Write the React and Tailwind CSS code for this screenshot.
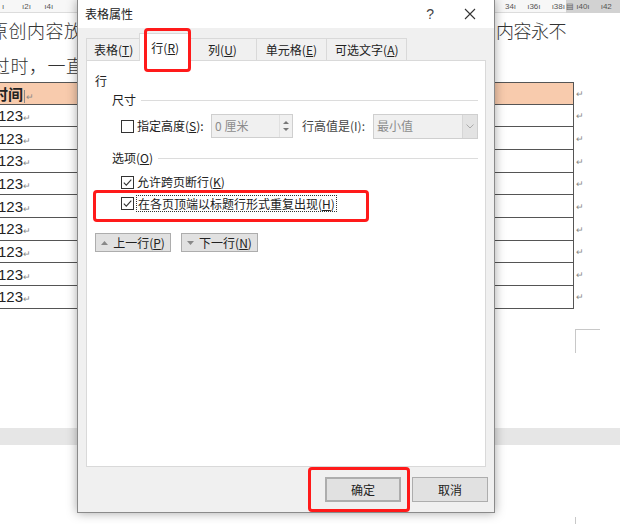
import React from "react";

const CJK = "font-['Microsoft_YaHei','Noto_Sans_CJK_SC',sans-serif]";

function U({ children }) {
  return <span className="underline underline-offset-1">{children}</span>;
}

function Check({ checked }) {
  return (
    <span className="w-[13px] h-[13px] border border-[#333] bg-white flex items-center justify-center shrink-0">
      {checked && (
        <svg width="11" height="11" viewBox="0 0 11 11">
          <polyline points="1.8,5.6 4.3,8.2 9.3,2.6" fill="none" stroke="#333" strokeWidth="1.1" />
        </svg>
      )}
    </span>
  );
}

function DocRow({ header }) {
  return (
    <div className="flex h-[22.67px]">
      <div
        className={
          header
            ? "w-[578px] -ml-[4px] border-t border-b border-r border-[#555] bg-[#f8cbad] flex items-center"
            : "w-[578px] -ml-[4px] border-b border-r border-[#555] bg-white flex items-center"
        }
      >
        {header ? (
          <span className="-ml-[3px] text-[15px] font-bold text-[#222] font-['Noto_Sans_CJK_SC',sans-serif] leading-none">
            时间<span className="text-[9px] font-normal text-[#888] border-l border-[#888] ml-[1px] pl-[1px]">↵</span>
          </span>
        ) : (
          <span className="pl-[2px] text-[15px] text-[#222] font-['Liberation_Sans',sans-serif] leading-none">
            123<span className="text-[9px] text-[#888]">↵</span>
          </span>
        )}
      </div>
      <div className="pl-[2px] flex items-center text-[9px] text-[#888]">↵</div>
    </div>
  );
}

function TabBtn({ children, active }) {
  if (active)
    return (
      <div className="h-[28px] -mx-[2px] px-[9px] bg-white border border-b-0 border-[#d9d9d9] flex items-center relative z-10 -mb-px text-[12px] text-[#222] whitespace-nowrap">
        {children}
      </div>
    );
  return (
    <div className="h-[22px] px-[7px] border border-b-0 border-[#d9d9d9] bg-[#f0f0f0] flex items-center text-[12px] text-[#222] -ml-px first:ml-0 whitespace-nowrap">
      {children}
    </div>
  );
}

function Btn({ children, className = "" }) {
  return (
    <div className={"bg-[#e1e1e1] border border-[#adadad] flex items-center justify-center text-[12px] text-[#222] whitespace-nowrap " + className}>
      {children}
    </div>
  );
}

export default function App() {
  return (
    <div className={"relative w-[620px] h-[524px] overflow-hidden bg-white " + CJK}>
      {/* Ruler */}
      <div className="flex h-[13px] text-[8px] text-[#555] leading-[13px] font-['Liberation_Sans',sans-serif]">
        <div className="w-[566px] bg-[#f7f7f7] border-b border-[#dcdcdc] flex">
          <span className="pl-[2px] whitespace-pre">ı        ı2ı      ı4ı</span>
          <span className="ml-auto whitespace-pre pr-[1px]">34ı     ı36ı     ı38ı</span>
        </div>
        <div className="flex-1 bg-[#d2d2d2] whitespace-pre">▤ ı40ı     ı42</div>
      </div>

      {/* Page */}
      <div className="h-[415px] pt-[4px] font-['Noto_Sans_CJK_SC',sans-serif] font-light text-[18px] text-[#333]">
        <div className="flex h-[26px] items-center">
          <span className="-ml-[10px] tracking-[0.5px] whitespace-nowrap">原创内容放到</span>
          <span className="ml-auto pr-[54px] tracking-[-0.5px] whitespace-nowrap">内容永不</span>
        </div>
        <div className="flex h-[26px] items-center mt-[9px]">
          <span className="-ml-[8px] tracking-[0.5px] whitespace-nowrap">过时，一直在</span>
        </div>
        <div className="mt-[4px]">
          <DocRow header />
          {Array.from({ length: 9 }).map((_, i) => (
            <DocRow key={i} />
          ))}
        </div>
        <div className="ml-[575px] mt-[20px] w-[25px] h-[24px] border-t border-l border-[#c8c8c8]" />
      </div>
      <div className="h-[17px] bg-[#e6e6e6]" />
      <div className="ml-[575px] mt-[72px] w-px h-[10px] bg-[#c8c8c8]" />

      {/* Dialog */}
      <div className="absolute left-[77px] top-0 w-[418px] h-[513px] flex flex-col border border-t-0 border-[#8a8a8a] shadow-[0_0_10px_rgba(0,0,0,0.35)] bg-[#f0f0f0]">
        <div className="h-[28px] bg-white flex items-center pl-[7px] text-[12px] text-[#222]">
          <span>表格属性</span>
          <span className="ml-auto mr-[30px] text-[14px] text-[#444] font-['Liberation_Sans',sans-serif]">?</span>
          <svg width="12" height="12" viewBox="0 0 12 12" className="mr-[18px]">
            <path d="M1 1L11 11M11 1L1 11" stroke="#333" strokeWidth="1.1" />
          </svg>
        </div>
        <div className="flex-1 flex flex-col px-[8px] pt-[4px]">
          <div className="flex items-end h-[28px] ml-0">
            <TabBtn>
              表格(<U>T</U>)
            </TabBtn>
            <TabBtn active>
              <span className="px-[2px]">行(<U>R</U>)</span>
            </TabBtn>
            <TabBtn>
              <span className="px-[12px]">列(<U>U</U>)</span>
            </TabBtn>
            <TabBtn>
              <span className="px-[2px]">单元格(<U>E</U>)</span>
            </TabBtn>
            <TabBtn>
              <span className="px-[1px]">可选文字(<U>A</U>)</span>
            </TabBtn>
          </div>
          <div className="h-[407px] bg-white border border-[#d9d9d9] text-[12px] text-[#222] pl-[8px] pr-[7px] relative">
            <div className="h-[20px] mt-[10px] flex items-center">行</div>
            <div className="flex items-center h-[18px] pl-[17px]">
              <span>尺寸</span>
              <div className="flex-1 h-px bg-[#dcdcdc] ml-[5px]" />
            </div>
            <div className="flex items-center h-[24px] mt-[5px] pl-[26px] whitespace-nowrap">
              <Check />
              <span className="ml-[3px]">
                指定高度(<U>S</U>):
              </span>
              <div className="ml-auto w-[82px] h-[24px] border border-[#cfcfcf] bg-[#f0f0f0] flex shrink-0">
                <span className="flex-1 pl-[3px] flex items-center text-[#8c8c8c]">0 厘米</span>
                <div className="w-[13px] flex flex-col items-center justify-center gap-[4px] border-l border-[#e0e0e0]">
                  <svg width="6" height="3" viewBox="0 0 6 3"><path d="M0 3L3 0L6 3Z" fill="#777" /></svg>
                  <svg width="6" height="3" viewBox="0 0 6 3"><path d="M0 0L3 3L6 0Z" fill="#777" /></svg>
                </div>
              </div>
              <span className="ml-[9px] text-[#444]">行高值是(I):</span>
              <div className="ml-[8px] w-[105px] h-[25px] border border-[#cfcfcf] bg-[#f0f0f0] flex shrink-0">
                <span className="flex-1 pl-[3px] flex items-center text-[#8c8c8c]">最小值</span>
                <div className="w-[15px] bg-[#e3e3e3] border-l border-[#d6d6d6] flex items-center justify-center">
                  <svg width="8" height="5" viewBox="0 0 8 5"><path d="M0.5 0.5L4 4L7.5 0.5" fill="none" stroke="#aaa" strokeWidth="1" /></svg>
                </div>
              </div>
            </div>
            <div className="flex items-center h-[18px] mt-[11px] pl-[17px]">
              <span>
                选项(<U>O</U>)
              </span>
              <div className="flex-1 h-px bg-[#dcdcdc] ml-[5px]" />
            </div>
            <div className="flex items-center h-[18px] mt-[6px] pl-[26px]">
              <Check checked />
              <span className="ml-[3px]">
                允许跨页断行(<U>K</U>)
              </span>
            </div>
            <div className="flex items-center h-[18px] mt-[3px] pl-[26px]">
              <Check checked />
              <span className="ml-[2px] border border-dotted border-[#333] px-[1px] leading-[15px]">
                在各页顶端以标题行形式重复出现(<U>H</U>)
              </span>
            </div>
            <div className="flex mt-[21px] gap-[10px]">
              <Btn className="w-[76px] h-[19px] gap-[5px]">
                <svg width="7" height="4" viewBox="0 0 7 4"><path d="M0 4L3.5 0L7 4Z" fill="#888" /></svg>
                <span>
                  上一行(<U>P</U>)
                </span>
              </Btn>
              <Btn className="w-[77px] h-[19px] gap-[5px]">
                <svg width="7" height="4" viewBox="0 0 7 4"><path d="M0 0L3.5 4L7 0Z" fill="#888" /></svg>
                <span>
                  下一行(<U>N</U>)
                </span>
              </Btn>
            </div>
          </div>
          <div className="flex justify-end gap-[11px] mt-[10px] -mr-[2px]">
            <Btn className="w-[76px] h-[25px] border-2 border-[#0078d7]">确定</Btn>
            <Btn className="w-[76px] h-[25px]">取消</Btn>
          </div>
        </div>

        {/* Red annotation boxes */}
        <div className="absolute left-[66px] top-[28px] w-[47px] h-[44px] border-[3px] border-[#ff1a1a] rounded-[4px] z-20" />
        <div className="absolute left-[15px] top-[190px] w-[276px] h-[32px] border-[3px] border-[#ff1a1a] rounded-[4px] z-20" />
        <div className="absolute left-[230px] top-[467px] w-[102px] h-[45px] border-[3px] border-[#ff1a1a] rounded-[4px] z-20" />
      </div>
    </div>
  );
}
